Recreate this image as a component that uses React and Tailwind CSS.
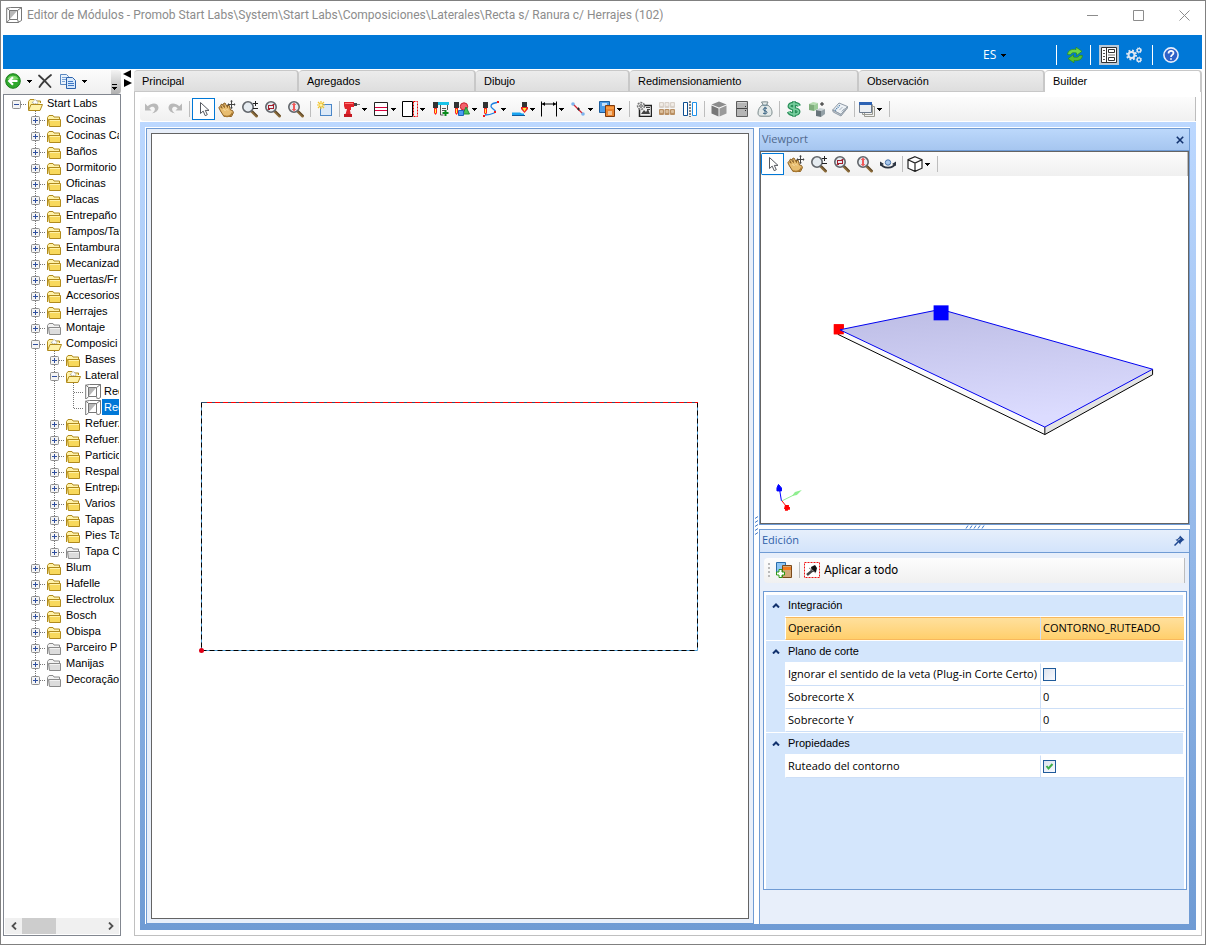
import React, { useState } from "react";

const UI = "font-['Open_Sans','Noto_Sans',sans-serif]";

/* ---------- drawing helpers ---------- */

function Ico({ children, w = 16, h = 16 }) {
  return (
    <svg width={w} height={h} viewBox={`0 0 ${w} ${h}`} fill="none" aria-hidden="true" className="shrink-0">
      {children}
    </svg>
  );
}

function Caret() {
  return (
    <svg width="5" height="3" viewBox="0 0 5 3" aria-hidden="true" className="shrink-0" shapeRendering="crispEdges">
      <path d="M0 0h5v1H4v1H3v1H2V2H1V1H0z" fill="#000" />
    </svg>
  );
}

function Glass({ children }) {
  return (
    <Ico w={18} h={18}>
      <path d="M11 11.5l4.5 4.500" stroke="#8a6a38" strokeWidth="3" strokeLinecap="round" />
      <path d="M11.500 11l4.500 4.500" stroke="#4a3a2a" strokeWidth="1" strokeLinecap="round" />
      <circle cx="7" cy="7" r="5.200" fill="#e6ecf1" stroke="#62666b" strokeWidth="1.600" />
      {children}
    </Ico>
  );
}

const icons = {
  undo: (
    <Ico>
      <path d="M1 2.500v7h6.500l-2.200-2.300C7 5.300 10 5 10.800 7.300c.5 1.800-.6 3.600-2.800 5.200 3.600-.6 6.500-2.800 6.500-5.900C14.500 2 8.200.8 3.700 5.200z" fill="#b9b9b9" />
    </Ico>
  ),
  redo: (
    <Ico>
      <path d="M15 2.500v7H8.500l2.200-2.300C9 5.300 6 5 5.200 7.300c-.5 1.800.6 3.600 2.800 5.200-3.600-.6-6.500-2.800-6.500-5.900C1.500 2 7.800.8 12.300 5.200z" fill="#b9b9b9" />
    </Ico>
  ),
  pointer: (
    <Ico>
      <path d="M4.500 1.500v11l2.700-2.400 2 4.600 2.100-1-2-4.300h3.700z" fill="#fff" stroke="#55585f" />
    </Ico>
  ),
  hand: (
    <Ico w={18} h={18}>
      <path d="M2.500 11L.8 7.500 2 6.500l2.200 1.700L2.500 5 4 4l2.500 3.500L5.500 3.500 7 3l2.500 4.500L9.500 5 11 5l1.500 5 2 .5 1 2-2 4H6z" fill="#e8bd70" stroke="#8a5f22" />
      <path d="M6 16c3.500.8 6 .4 7.500-1.500l1-2" stroke="#a87830" strokeWidth="1.500" />
      <path d="M5.500 9l2 2M8.500 9l1.500 1.500" stroke="#fbe3b0" />
      <path d="M13.500 1v7M10 4.500h7" stroke="#444" />
      <path d="M13.500 0l-1.500 1.500h3zM13.500 9l-1.500-1.500h3zM9.500 4.500L11 3v3zM17.500 4.500L16 3v3z" fill="#444" />
    </Ico>
  ),
  zoomPm: (
    <Glass>
      <path d="M14.500 1v5M12 3.500h5M12 8.500h5" stroke="#222" />
    </Glass>
  ),
  zoomRect: (
    <Glass>
      <rect x="4.500" y="5.500" width="5" height="3" stroke="#a31f2c" />
      <path d="M3 10h3V8zM11 4H8.500v2z" fill="#a31f2c" />
    </Glass>
  ),
  zoomFit: (
    <Glass>
      <path d="M7 2.500L9.300 5H8v4h1.300L7 11.500 4.700 9H6V5H4.700z" fill="#f05a5a" />
    </Glass>
  ),
  newItem: (
    <Ico>
      <rect x="3.500" y="3.500" width="11" height="11" fill="#dbe9f8" stroke="#4a86c8" />
      <path d="M4 0v8M0 4h8M1 1l6 6M7 1L1 7" stroke="#f2c52e" strokeWidth="1.200" />
      <circle cx="4" cy="4" r="1.500" fill="#fff3a8" />
    </Ico>
  ),
  drill: (
    <Ico>
      <path d="M0 1h10v5H7v3H6l1 6H1l2-7H1L0 5z" fill="#e0242b" />
      <path d="M1 2h8v1H1z" fill="#ff7a78" />
      <path d="M0 13h8v3H0z" fill="#c41820" />
      <path d="M10 2h3v3h-3z" fill="#444" />
      <path d="M13 3.500h3" stroke="#777" />
    </Ico>
  ),
  bands: (
    <Ico>
      <path d="M1.500 1.500h13v13h-13z" fill="#fff" stroke="#222" />
      <path d="M2 6.500h12M2 9.500h12" stroke="#d8003c" />
    </Ico>
  ),
  margin: (
    <Ico>
      <path d="M.5.500h10v15H.5z" fill="#fff" stroke="#000" />
      <path d="M11.500.500h4v15h-4z" stroke="#e00" strokeDasharray="2 1" />
    </Ico>
  ),
  millList: (
    <Ico>
      <path d="M0 1h5v6H0z" fill="#333" />
      <path d="M1 7h3v5l-1.500 2L1 12z" fill="#f22" />
      <path d="M2 8h1v4H2z" fill="#ff3" />
      <path d="M5 1h11v3H5z" fill="#19c3e8" />
      <path d="M7.500 4v10h3M14.500 4v5M9 7.500h4M9 9.500h3" stroke="#555" />
      <path d="M12.500 9v6M9.500 12h6" stroke="#0a8a1c" strokeWidth="2" />
    </Ico>
  ),
  millShapes: (
    <Ico>
      <path d="M0 1h5v6H0z" fill="#333" />
      <path d="M1 7h3v5l-1.500 2L1 12z" fill="#f22" />
      <path d="M2 8h1v4H2z" fill="#ff3" />
      <circle cx="10" cy="5.500" r="3.700" fill="#f4626c" stroke="#c8202c" />
      <path d="M12 6l3.500 7H9z" fill="#46c45a" stroke="#1d8a35" />
      <path d="M4.500 9.500h5v5h-5z" fill="#4d9cf2" stroke="#1d62b8" />
    </Ico>
  ),
  millPath: (
    <Ico>
      <path d="M0 1h5v6H0z" fill="#333" />
      <path d="M1 7h3v5l-1.500 2L1 12z" fill="#f22" />
      <path d="M2 8h1v4H2z" fill="#ff3" />
      <path d="M14 1.500c-7 1-7 4-4.500 6s4.500 3 1.500 4.500-4 2-9 2" stroke="#1d7fe0" strokeWidth="1.300" />
      <path d="M14 0h2v2h-2zM11 10h2v2h-2zM0 14h2v2H0z" fill="#f01818" />
    </Ico>
  ),
  millFace: (
    <Ico>
      <path d="M10 1h5v5h-5z" fill="#333" />
      <path d="M9 6h7v2l-3.500 4L9 8z" fill="#e22" />
      <path d="M10.500 7h4l-2 3.500z" fill="#fe3" />
      <path d="M0 11.500h8l2 1h2V14H0z" fill="#1aa4f0" />
      <path d="M0 14.500h13" stroke="#125a9c" />
    </Ico>
  ),
  dimension: (
    <Ico>
      <path d="M.5.500v15M15.500.500v15M1 3h14" stroke="#000" />
      <path d="M1 3l3-2v4zM15 3l-3-2v4z" fill="#000" />
    </Ico>
  ),
  line: (
    <Ico>
      <path d="M3 3l10 10" stroke="#d02030" strokeWidth="1.300" />
      <path d="M7 8h3M8.500 6.500v3" stroke="#222" />
      <circle cx="3" cy="3" r="1.800" fill="#7db4ee" />
      <circle cx="13" cy="13" r="1.800" fill="#7db4ee" />
    </Ico>
  ),
  boxes: (
    <Ico>
      <path d="M.5.500h10v11H.5z" fill="#4d9de8" stroke="#1f5f9e" />
      <path d="M3 2h5v3H3z" fill="#c5e0fa" />
      <path d="M6.500 4.500h9v11h-9z" fill="#e8822c" stroke="#7b3b10" />
      <path d="M9 10h4v4H9z" fill="#f5c08c" />
      <path d="M7 7h8" stroke="#fa9a40" strokeWidth="2" />
    </Ico>
  ),
  gearImage: (
    <Ico>
      <path d="M3.500 4.500h12v11h-12z" fill="#f0f0f0" stroke="#222" strokeWidth="1.500" />
      <path d="M5 13l3-4 2 2 2-3 2 5zM10 6h4v1h-4zM11 8h3v1h-3z" fill="#444" />
      <circle cx="5" cy="5" r="3.400" fill="#eee" stroke="#777" strokeWidth="1.600" strokeDasharray="2 1" />
      <circle cx="5" cy="5" r="1.300" fill="#fff" stroke="#555" />
    </Ico>
  ),
  drawers: (
    <Ico>
      {[0, 5.500, 11].map((x) => (
        <g key={x}>
          <rect x={x} y="1" width="5" height="6" rx="1" fill="#d8d0c8" />
          <rect x={x + 1} y="2" width="3" height="3" rx="1" fill="#f0ebe5" />
          <rect x={x} y="8" width="5" height="6" rx="1" fill="#b98f62" />
          <rect x={x + 1} y="9" width="3" height="3" rx="1" fill="#dcbf9c" />
        </g>
      ))}
    </Ico>
  ),
  mirror: (
    <Ico>
      <path d="M1.500 1.500h4v13h-4z" fill="#fff" stroke="#0d4f92" />
      <path d="M10.500 1.500h4v13h-4z" fill="#fff" stroke="#1f90e8" />
      <path d="M8 0v16" stroke="#111" strokeDasharray="2 1" />
    </Ico>
  ),
  cubeSolid: (
    <Ico>
      <path d="M8 .5l7.500 3L8 6.500.5 3.500z" fill="#8c8c8c" />
      <path d="M.5 4.500L7.500 7.500v8l-7-3z" fill="#777" />
      <path d="M15.500 4.500L8.500 7.500v8l7-3z" fill="#9a9a9a" />
    </Ico>
  ),
  cabinet: (
    <Ico>
      <path d="M2.500.500h11v15h-11z" fill="#b5b5b5" stroke="#5c5c5c" />
      <path d="M3 7.500h10" stroke="#444" />
      <path d="M11 5.500h1M11 9.500h1" stroke="#333" />
      <path d="M3.500 1.500h9" stroke="#d5d5d5" />
    </Ico>
  ),
  moneyBag: (
    <Ico>
      <path d="M6 3.500L4.500 1 8 .8 11 1 9.700 3.500c4 2 5.500 5.500 5.300 8.500-.2 2.300-1.500 3.200-3 3.200H4C2 15.200 1 14 1 12c0-3 1.500-6.500 5-8.500z" fill="#e3e9e8" stroke="#7c8a8c" />
      <path d="M5.500 4.200h5" stroke="#4e7080" />
      <path d="M10 7.500C9 6.500 6.300 6.800 6.300 8.500s3.700 1 3.700 2.800-3 2-4 .7M8 5.800v7.400" stroke="#356080" />
    </Ico>
  ),
  dollar: (
    <Ico>
      <path d="M13 5C12 2 4 2 3.500 5.200 3.200 8.200 12.800 7 12.500 10.800 12 14 4 14 2.800 10.600M8 .2v15.600" stroke="#2b8f5a" strokeWidth="4" />
      <path d="M13 5C12 2 4 2 3.500 5.200 3.200 8.200 12.800 7 12.500 10.800 12 14 4 14 2.800 10.600M8 1v14" stroke="#7ad0a0" strokeWidth="1.600" />
    </Ico>
  ),
  cubes: (
    <Ico>
      <path d="M0 3l4-2 5 1-4 2z" fill="#b5dcb0" />
      <path d="M0 3l5 1v6L0 9z" fill="#7fae7c" />
      <path d="M5 4l4-2v6l-4 2z" fill="#9ccb98" />
      <path d="M7 9l4-2 5 1-4 2z" fill="#c9d2d6" />
      <path d="M7 9l5 1v6l-5-1z" fill="#68747a" />
      <path d="M12 10l4-2v5l-4 3z" fill="#93a0a6" />
      <path d="M13 1v4M11 3h4" stroke="#222" />
    </Ico>
  ),
  tag: (
    <Ico>
      <path d="M.7 9L7 2l8.500 3.500L9 13.500z" fill="#eef2f6" stroke="#8f9aa5" />
      <path d="M.7 9l.5 2L9 15l6.500-8V5.500L9 13.500z" fill="#cdd4da" stroke="#8f9aa5" />
      <path d="M3 9.500L8 4" stroke="#4a7ba8" strokeDasharray="1 1" strokeWidth="1.500" />
      <path d="M7.500 9l3-3M9.500 10.500l3-3" stroke="#a7b4c0" />
    </Ico>
  ),
  windows: (
    <Ico>
      <path d="M5.500 5.500h10v10h-10zM3.500 3.500h10v10h-10z" fill="#f2f2f0" stroke="#9a9a92" />
      <path d="M.5 1.500h12v10H.5z" fill="#eceff2" stroke="#6d7a8c" />
      <path d="M0 1h13v3H0z" fill="#2c62b4" />
    </Ico>
  ),
  orbit: (
    <Ico>
      <circle cx="8" cy="6.500" r="2.700" fill="#a9c9ee" stroke="#4872a8" />
      <path d="M1 7.500c1.500 5.500 12.500 5.500 14 0" stroke="#2c3440" strokeWidth="1.800" />
      <path d="M0 10V5.500L4 8zM16 10V5.500L12 8z" fill="#2c3440" />
    </Ico>
  ),
  cubeWire: (
    <Ico>
      <path d="M8 .7l7 3v8.500l-7 3.200-7-3.200V3.700zM1 3.700L8 7l7-3.300M8 7v8.500" fill="#fff" stroke="#222" strokeWidth="1.200" />
    </Ico>
  ),
  back: (
    <Ico>
      <circle cx="8" cy="8" r="7.300" fill="#2fa82c" stroke="#1c7d1c" />
      <path d="M2.500 6C4 1.500 12 1.500 13.500 6 10 7.500 6 7.500 2.500 6z" fill="#7fd86e" />
      <path d="M12.500 8H5M8 4.200L4.200 8 8 11.800" stroke="#fff" strokeWidth="2.200" />
    </Ico>
  ),
  remove: (
    <Ico>
      <path d="M2 2.500C6 6 10 10 13.500 14M14 2C9 6 5 10 2.500 14" stroke="#3c3c3c" strokeWidth="1.800" strokeLinecap="round" />
    </Ico>
  ),
  copy: (
    <Ico>
      <path d="M.5 1.500h6l2 2v8h-8z" fill="#eaf3fc" stroke="#5b88c0" />
      <path d="M2 4.500h4M2 6.500h4M2 8.500h3" stroke="#7ba4d8" />
      <path d="M6.500 4.500h6l3 3v8h-9z" fill="#d6e8fb" stroke="#2c62ac" />
      <path d="M8 8.500h5M8 10.500h6M8 12.500h6" stroke="#3f78c4" />
    </Ico>
  ),
  refresh: (
    <Ico>
      <path d="M.5 7.500C.8 3.500 4.500 1.800 9 2.500V.2L15 4.300 9.500 8.500V6C6.500 5.300 4.500 5.500 3.500 7.800z" fill="#6fd648" stroke="#2b8a18" strokeWidth=".7" />
      <path d="M15.500 8.500c-.3 4-4 5.700-8.500 5v2.300L1 11.700l5.500-4.200V10c3 .7 5 .5 6-1.800z" fill="#55c030" stroke="#2b8a18" strokeWidth=".7" />
    </Ico>
  ),
  panels: (
    <Ico>
      <path d="M.5.500h15v15H.5z" fill="#fff" stroke="#333" />
      <path d="M5.500 1v14" stroke="#333" />
      <path d="M2 3.500h2M2 6.500h2M2 9.500h2M2 12.500h2" stroke="#555" />
      <path d="M7.500 2.500h6v3h-6zM7.500 10.500h6v3h-6z" stroke="#333" />
      <path d="M7 8h7" stroke="#777" />
    </Ico>
  ),
  gears: (
    <Ico>
      <circle cx="5.500" cy="8" r="4.500" stroke="#dfe7f2" strokeWidth="2" strokeDasharray="1.800 1.730" />
      <circle cx="5.500" cy="8" r="3" stroke="#dfe7f2" strokeWidth="2" />
      <circle cx="13" cy="3.300" r="1.800" stroke="#dfe7f2" strokeWidth="1.400" />
      <circle cx="13" cy="3.300" r="2.600" stroke="#dfe7f2" strokeDasharray="1 1" />
      <circle cx="13" cy="12.700" r="1.800" stroke="#dfe7f2" strokeWidth="1.400" />
      <circle cx="13" cy="12.700" r="2.600" stroke="#dfe7f2" strokeDasharray="1 1" />
    </Ico>
  ),
  help: (
    <Ico>
      <circle cx="8" cy="8" r="7.100" fill="#2f62c8" stroke="#e8eefb" strokeWidth="1.600" />
      <path d="M5.500 6.500C5.500 3 10.800 3.200 10.500 6.200 10.300 8 8 8 8 10M8 11.200v1.600" stroke="#fff" strokeWidth="1.700" />
    </Ico>
  ),
  addModule: (
    <Ico>
      <path d="M.5.500h9v11h-9z" fill="#8ec6f4" stroke="#2a6cab" />
      <path d="M6.500 3.500h9v12h-9z" fill="#d2a878" stroke="#7b4a1c" />
      <path d="M7 6.500h8" stroke="#f37a1c" strokeWidth="3" />
      <path d="M3 7.500h3v2.500h2.500v3H6v2.500H3V13H.5v-3H3z" fill="#fff" stroke="#2d9a10" />
    </Ico>
  ),
  applyAll: (
    <Ico>
      <path d="M.5.500h15v15H.5z" fill="#fff" stroke="#e11" strokeDasharray="2 1" />
      <path d="M7 5l4-2 2 3-1 4-4 0z" fill="#111" />
      <path d="M9 8l-6 5" stroke="#444" strokeWidth="2.500" />
      <path d="M5 6l7 5" stroke="#888" />
    </Ico>
  ),
};

function ModuleIcon() {
  return (
    <Ico>
      <path d="M.7 1.200L4.500.500h11v13l-3.500 2H.7z" fill="#fff" stroke="#777" />
      <path d="M3.500 3.500h8v9h-8z" fill="#fff" stroke="#777" />
      <path d="M4 12V4h7z" fill="#b8b8b8" />
      <path d="M.7 1l3 2.500M11.500 3.500l4-3M11.500 12.500l1 3M.7 15.500l3-3" stroke="#777" />
    </Ico>
  );
}

function Folder({ open, gray }) {
  const c = gray
    ? { s: "#8a8a8a", a: "#f2f2f2", b: "#dcdcdc" }
    : { s: "#b08a1c", a: "#fff2a8", b: "#f8d95c" };
  return (
    <Ico w={15} h={13}>
      <path d="M.5 12V3.500l1.500-2h4l1 1.500h5.500V5" fill={c.a} stroke={c.s} />
      {open ? (
        <>
          <path d="M4 5l3-3.500L10 4l-1 2z" fill="#fff" stroke="#9a9a9a" strokeDasharray="1 1" />
          <path d="M.5 12.500l2.500-6h11.500l-2.500 6z" fill={c.a} stroke={c.s} />
        </>
      ) : (
        <path d="M2.500 12.500L1.500 5.500h12v7z" fill={c.b} stroke={c.s} />
      )}
      {!open && <path d="M3 6.500h10" stroke={c.a} />}
    </Ico>
  );
}

/* ---------- toolbar parts ---------- */

function Tool({ icon, label, menu, active }) {
  const size = menu ? "w-[29px] justify-start gap-0.5 pl-0.5" : "w-[23px] justify-center";
  const frame = active ? "border border-[#0078d7] bg-white" : "";
  return (
    <button type="button" aria-label={label} className={`flex h-[22px] shrink-0 items-center ${size} ${frame}`}>
      {icons[icon]}
      {menu && <Caret />}
    </button>
  );
}

function Sep() {
  return (
    <span className="flex h-4 w-1.5 shrink-0 justify-end pr-0.5">
      <span className="w-px bg-[#bdbdbd]" />
    </span>
  );
}

const mainTools = [
  ["undo", "Deshacer"], ["redo", "Rehacer"], null,
  ["pointer", "Seleccionar", 0, 1], ["hand", "Mover"], ["zoomPm", "Zoom"], ["zoomRect", "Zoom de área"], ["zoomFit", "Zoom total"], null,
  ["newItem", "Nuevo"], null,
  ["drill", "Perforación", 1], ["bands", "Ranura", 1], ["margin", "Margen", 1], ["millList", "Lista de fresado"],
  ["millShapes", "Formas", 1], ["millPath", "Trayectoria", 1], ["millFace", "Superficie", 1], ["dimension", "Cota", 1],
  ["line", "Línea", 1], ["boxes", "Módulos", 1], null,
  ["gearImage", "Configurar imagen"], ["drawers", "Cajones"], ["mirror", "Espejar"], null,
  ["cubeSolid", "Sólido"], ["cabinet", "Mueble"], ["moneyBag", "Costo"], null,
  ["dollar", "Precio"], ["cubes", "Componentes"], ["tag", "Etiqueta"], null,
  ["windows", "Ventanas", 1], null,
];

const viewTools = [
  ["pointer", "Seleccionar", 0, 1], ["hand", "Mover"], ["zoomPm", "Zoom"], ["zoomRect", "Zoom de área"],
  ["zoomFit", "Zoom total"], ["orbit", "Orbitar"], null, ["cubeWire", "Vista", 1], null,
];

function Toolbar({ items, label }) {
  return (
    <div role="toolbar" aria-label={label} className="flex h-6 shrink-0 items-center overflow-hidden rounded-l border-r border-[#bdbdbd] bg-linear-to-b from-[#fcfcfc] to-[#f0f0f0]">
      {items.map((t, i) =>
        t ? <Tool key={i} icon={t[0]} label={t[1]} menu={!!t[2]} active={!!t[3]} /> : <Sep key={i} />
      )}
    </div>
  );
}

/* ---------- tree ---------- */

// [level, text, kind, state]; kind: f folder, g grey folder, o open folder, m module
const tree = [
  [0, "Start Labs", "o"],
  [1, "Cocinas", "f"], [1, "Cocinas Ca", "f"], [1, "Baños", "f"], [1, "Dormitorio", "f"], [1, "Oficinas", "f"],
  [1, "Placas", "f"], [1, "Entrepaño", "f"], [1, "Tampos/Ta", "f"], [1, "Entambura", "f"], [1, "Mecanizad", "f"],
  [1, "Puertas/Fr", "f"], [1, "Accesorios", "f"], [1, "Herrajes", "f"], [1, "Montaje", "g"], [1, "Composici", "o"],
  [2, "Bases", "f"], [2, "Lateral", "o"],
  [3, "Rec", "m"], [3, "Rec", "m", "selected"],
  [2, "Refuerz", "f"], [2, "Refuerz", "f"], [2, "Particio", "f"], [2, "Respal", "f"], [2, "Entrepa", "f"],
  [2, "Varios", "f"], [2, "Tapas", "f"], [2, "Pies Ta", "f"], [2, "Tapa C", "g"],
  [1, "Blum", "f"], [1, "Hafelle", "f"], [1, "Electrolux", "f"], [1, "Bosch", "f"], [1, "Obispa", "f"],
  [1, "Parceiro P", "g"], [1, "Manijas", "g"], [1, "Decoração", "g"],
];

function hasNext(index, level) {
  for (let i = index + 1; i < tree.length; i++) {
    if (tree[i][0] < level) return false;
    if (tree[i][0] === level) return true;
  }
  return false;
}

function Guide({ index, column }) {
  const [level, , kind] = tree[index];
  const own = column === level;
  const next = hasNext(index, column);
  return (
    <svg width="19" height="16" viewBox="0 0 19 16" fill="none" aria-hidden="true" className="shrink-0">
      {column > 0 && (own || next) && (
        <path d={`M9.500 0V${next ? 16 : 9}`} stroke="#777" strokeDasharray="1 1" />
      )}
      {own && <path d="M10 9.500h9" stroke="#777" strokeDasharray="1 1" />}
      {own && kind !== "m" && (
        <>
          <rect x="5.500" y="5.500" width="8" height="8" rx="1" fill="#f4f4f4" stroke="#8f8f8f" />
          <path d={kind === "o" ? "M7 9.500h5" : "M7 9.500h5M9.500 7v5"} stroke="#2f4f9f" />
        </>
      )}
    </svg>
  );
}

function TreeRow({ index }) {
  const [level, text, kind, state] = tree[index];
  return (
    <li role="treeitem" aria-level={level + 1} aria-selected={state === "selected"} className="flex h-4 items-center overflow-hidden">
      {Array.from({ length: level + 1 }, (_, c) => (
        <Guide key={c} index={index} column={c} />
      ))}
      <span className="flex w-[19px] shrink-0 justify-center pt-0.5">
        {kind === "m" ? <ModuleIcon /> : <Folder open={kind === "o"} gray={kind === "g"} />}
      </span>
      <span className={`px-0.5 whitespace-nowrap ${state ? "bg-[#0078d7] text-white" : ""}`}>{text}</span>
    </li>
  );
}

function Sidebar() {
  return (
    <aside className="flex w-[118px] shrink-0 flex-col font-['Liberation_Sans',sans-serif] text-[11px] leading-4">
      <div role="toolbar" aria-label="Navegación" className="flex h-6 items-stretch bg-linear-to-b from-[#fcfcfc] to-[#f0f0f0] pl-0.5">
        <button type="button" aria-label="Volver" className="flex w-8 items-center gap-1.5 pb-0.5">
          {icons.back}
          <Caret />
        </button>
        <button type="button" aria-label="Eliminar" className="flex w-[23px] items-center justify-start pb-0.5">
          {icons.remove}
        </button>
        <button type="button" aria-label="Copiar" className="flex items-center gap-1.5 pb-0.5">
          {icons.copy}
          <Caret />
        </button>
        <button type="button" aria-label="Más opciones" className="ml-auto flex w-2.5 flex-col items-start justify-end gap-0.5 rounded-r bg-linear-to-b from-[#f4f4f4] to-[#b0b0b0] pb-1 pl-px">
          <span className="h-px w-[5px] bg-black" />
          <Caret />
        </button>
      </div>
      <div className="flex min-h-0 grow flex-col overflow-hidden border border-[#828790] bg-white">
        <ul role="tree" aria-label="Start Labs" className="grow overflow-hidden pr-px pl-[3px]">
          {tree.map((_, i) => (
            <TreeRow key={i} index={i} />
          ))}
        </ul>
        <div className="m-px flex h-4 items-center bg-[#f0f0f0]">
          <button type="button" aria-label="Izquierda" className="flex w-[17px] justify-center">
            <Ico w={6} h={8}><path d="M5 .5L1.500 4 5 7.500" stroke="#505050" strokeWidth="1.800" /></Ico>
          </button>
          <span className="h-full w-[34px] bg-[#cdcdcd]" />
          <button type="button" aria-label="Derecha" className="ml-auto flex w-[17px] justify-center">
            <Ico w={6} h={8}><path d="M1 .5L4.500 4 1 7.500" stroke="#505050" strokeWidth="1.800" /></Ico>
          </button>
        </div>
      </div>
    </aside>
  );
}

/* ---------- workspace ---------- */

const tabs = [
  ["Principal", "grow-[155]"],
  ["Agregados", "grow-[167]"],
  ["Dibujo", "grow-[144]"],
  ["Redimensionamiento", "grow-[219]"],
  ["Observación", "grow-[176]"],
  ["Builder", "grow-[147]"],
];

function Canvas() {
  return (
    <div className="flex min-w-0 grow-[598] basis-0 border border-[#6f9bd4] bg-[#e8effa] p-1">
      <div className="flex min-h-0 grow items-center justify-center overflow-hidden border border-[#646464] bg-white">
        <svg width="502" height="254" viewBox="0 0 502 254" fill="none" className="shrink-0">
          <path d="M2.500 3.500v248M2.500 251.500h496M498.500 3.500v248" stroke="#4f9fd8" />
          <path d="M2.500 3.500v248" stroke="#000" strokeDasharray="5 3" />
          <path d="M2.500 251.500h496" stroke="#000" strokeDasharray="5 3" />
          <path d="M498.500 3.500v248" stroke="#000" strokeDasharray="5 3" />
          <path d="M2 3.500h497" stroke="#30506c" />
          <path d="M8 3.500h491" stroke="#f00" strokeDasharray="5 3" />
          <circle cx="2.500" cy="251.500" r="2.500" fill="#e00018" />
        </svg>
      </div>
    </div>
  );
}

function Scene() {
  return (
    <svg viewBox="0 0 428 344" preserveAspectRatio="xMidYMid meet" fill="none" className="min-h-0 w-full grow">
      <defs>
        <linearGradient id="board" x1="0" y1="0" x2="0.200" y2="1">
          <stop offset="0" stopColor="#bcbce4" />
          <stop offset="1" stopColor="#dcdcff" />
        </linearGradient>
      </defs>
      <path d="M79 153L284.500 250v7.500L77 157z" fill="#fafafa" />
      <path d="M284.500 250L392.500 192v5.500l-108 60z" fill="#e4e4e4" />
      <path d="M77 157l207.500 100.500 108-60V192M284.500 250v7.500" stroke="#000" />
      <path d="M73 147h10v10H73z" fill="#f00" />
      <path d="M79 152.500L180 132l212.500 60-108 58z" fill="url(#board)" stroke="#0000f0" />
      <path d="M73 147h6v10h-6zM77 147h6v4h-6z" fill="#f00" />
      <path d="M173 128h15v15h-15z" fill="#00f" />
      <path d="M20.500 324l-2-12" stroke="#00f" />
      <path d="M17.500 307.500l3 3.500v3h-4.500v-3z" fill="#00f" stroke="#00f" />
      <path d="M21 324l12-6" stroke="#90ee90" />
      <path d="M31 319l3-4 7-2-5 5z" fill="#90ee90" />
      <path d="M21 324l4 5" stroke="#f00" />
      <path d="M24 328h4v2h1v3h-2v1h-3v-2h-1z" fill="#f00" />
    </svg>
  );
}

const groups = [
  { title: "Integración", rows: [{ label: "Operación", value: "CONTORNO_RUTEADO", selected: true }] },
  {
    title: "Plano de corte",
    rows: [
      { label: "Ignorar el sentido de la veta (Plug-in Corte Certo)", check: false },
      { label: "Sobrecorte X", value: "0" },
      { label: "Sobrecorte Y", value: "0" },
    ],
  },
  { title: "Propiedades", rows: [{ label: "Ruteado del contorno", check: true }] },
];

function Check({ id, initial }) {
  const [on, setOn] = useState(initial);
  return (
    <span className="relative flex size-[13px]">
      <input
        id={id}
        type="checkbox"
        checked={on}
        onChange={(e) => setOn(e.target.checked)}
        className="size-[13px] appearance-none border border-[#1f5a9a] bg-linear-to-br from-[#dde3ee] to-[#f8faff]"
      />
      {on && (
        <svg width="9" height="9" viewBox="0 0 9 9" fill="none" className="pointer-events-none absolute top-0.5 left-0.5">
          <path d="M1.500 4l2 2.500 4-4.500" stroke="#3fae49" strokeWidth="2" />
        </svg>
      )}
    </span>
  );
}

function PropertyRow({ row, id }) {
  const bg = row.selected
    ? "border-y border-y-[#f8b85c] bg-linear-to-b from-[#ffe09c] to-[#ffcf6b]"
    : "border-y border-t-white border-b-[#cddff7] bg-white";
  return (
    <tr className="h-[23px]">
      <td className="bg-[#d4e6fc]" />
      <td className={`border-l border-l-white pl-0.5 ${bg}`}>
        <label htmlFor={id} className="block whitespace-nowrap">{row.label}</label>
      </td>
      <td className={`border-l border-l-[#cddff7] px-0.5 ${bg}`}>
        {row.value === undefined ? (
          <Check id={id} initial={row.check} />
        ) : (
          <input id={id} type="text" defaultValue={row.value} className="block h-4 w-full bg-transparent" />
        )}
      </td>
    </tr>
  );
}

function PropertyGrid() {
  return (
    <div className={`mt-2 mr-0.5 mb-[34px] ml-[3px] flex min-h-0 grow flex-col overflow-hidden border border-[#6f9bd4] bg-white px-0.5 pt-0.5 text-[11px] leading-4 ${UI}`}>
      <div className="grow bg-[#d4e6fc]">
        <table className="w-full table-fixed border-separate border-spacing-0">
          <colgroup>
            <col className="w-[19px]" />
            <col className="w-[255px]" />
            <col />
          </colgroup>
          {groups.map((g, gi) => (
            <tbody key={g.title}>
              <tr className="h-[23px]">
                <th className="border-t border-white bg-[#d4e6fc]">
                  <button type="button" aria-label={`Contraer ${g.title}`} className="flex w-full justify-center">
                    <Ico w={8} h={5}><path d="M1 4.500l3-3 3 3" stroke="#12326e" strokeWidth="2" /></Ico>
                  </button>
                </th>
                <th colSpan={2} className="border-y border-r border-white bg-[#d4e6fc] pl-[3px] text-left font-['Liberation_Sans',sans-serif] font-normal">
                  {g.title}
                </th>
              </tr>
              {g.rows.map((r, ri) => (
                <PropertyRow key={r.label} row={r} id={`prop-${gi}-${ri}`} />
              ))}
            </tbody>
          ))}
        </table>
      </div>
    </div>
  );
}

function Grip({ vertical }) {
  return (
    <svg width={vertical ? 5 : 20} height={vertical ? 20 : 4} fill="none" aria-hidden="true">
      {[0, 4, 8, 12, 16].map((p) => (
        <path key={p} d={vertical ? `M1 ${p + 2.500}l3-2` : `M${p + 1} 3.500l2-3`} stroke="#3f78c8" />
      ))}
    </svg>
  );
}

function RightColumn() {
  return (
    <div className={`flex min-w-0 grow-[431] basis-0 flex-col ${UI}`}>
      <section aria-label="Viewport" className="flex min-h-0 grow basis-0 flex-col border border-[#6f9bd4] bg-white">
        <header className="flex h-[22px] shrink-0 items-center justify-between border-b border-[#6f9bd4] bg-linear-to-b from-[#bcd8fb] to-[#a6c6f0] pr-[5px] pl-0.5 text-[11px] text-[#50698e]">
          <h2>Viewport</h2>
          <button type="button" aria-label="Cerrar">
            <Ico w={8} h={8}><path d="M.8.800l6.400 6.400M7.200.800L.8 7.200" stroke="#12326e" strokeWidth="1.600" /></Ico>
          </button>
        </header>
        <div className="flex min-h-0 grow flex-col border border-[#646464] bg-white">
          <Toolbar items={viewTools} label="Viewport" />
          <Scene />
        </div>
      </section>
      <div className="flex h-1 shrink-0 justify-center bg-white">
        <Grip />
      </div>
      <section aria-label="Edición" className="flex min-h-0 grow basis-0 flex-col border border-b-0 border-[#6f9bd4] bg-[#e8effa]">
        <header className="flex h-[23px] shrink-0 items-center justify-between border-b border-[#6f9bd4] bg-linear-to-b from-[#e6effb] to-[#d3e4fb] pr-1 pl-0.5 text-[11px] text-[#2f5fa8]">
          <h2>Edición</h2>
          <button type="button" aria-label="Fijar panel">
            <Ico w={11} h={11}>
              <path d="M6 .5l4.500 4.500-1.500.5L6.500 8v1.500L1.500 4.500H3L5.500 2z" fill="#1d4690" />
              <path d="M6 3.500l-2 2" stroke="#fff" />
              <path d="M4 7L.5 10.500" stroke="#1d4690" strokeWidth="1.500" />
            </Ico>
          </button>
        </header>
        <div role="toolbar" aria-label="Edición" className="mx-1 mt-[5px] flex h-[25px] shrink-0 items-center rounded-l border-r border-[#bdbdbd] bg-linear-to-b from-[#fdfdfd] to-[#f0f0f0] pl-1 font-['Roboto',sans-serif] text-[12px]">
          <svg width="2" height="14" aria-hidden="true" className="mr-1.5 shrink-0">
            <path d="M1 0v14" stroke="#bbb" strokeWidth="2" strokeDasharray="2 2" />
          </svg>
          <button type="button" aria-label="Agregar módulo" className="mr-1">{icons.addModule}</button>
          <Sep />
          <button type="button" className="flex items-center gap-1 pl-0.5 whitespace-nowrap">
            {icons.applyAll}
            Aplicar a todo
          </button>
        </div>
        <PropertyGrid />
      </section>
    </div>
  );
}

function Workspace() {
  const [tab, setTab] = useState("Builder");
  return (
    <main className="flex min-w-0 grow flex-col">
      <div role="tablist" aria-label="Secciones" className="flex h-[22px] shrink-0 font-['Liberation_Sans',sans-serif] text-[11px]">
        {tabs.map(([name, grow]) => (
          <button
            key={name}
            type="button"
            role="tab"
            aria-selected={tab === name}
            onClick={() => setTab(name)}
            className={`basis-0 truncate rounded-t-sm border-t border-r-2 border-[#c8c8c8] pl-2 text-left ${grow} ${
              tab === name ? "bg-white" : "border-b bg-linear-to-b from-[#ececec] to-[#dedede]"
            }`}
          >
            {name}
          </button>
        ))}
      </div>
      <div className="flex min-h-0 grow flex-col border-x border-b border-[#c0c0c0] p-[5px]">
        <Toolbar items={mainTools} label="Herramientas" />
        <div className="mt-px flex min-h-0 grow bg-linear-to-b from-[#bcd8ff] to-[#6f9bd4] pt-[5px] pr-1.5 pb-1.5 pl-[5px]">
          <div className="flex min-w-0 grow border-t border-l border-white">
            <Canvas />
            <div className="flex w-[5px] shrink-0 items-center bg-white">
              <Grip vertical />
            </div>
            <RightColumn />
          </div>
        </div>
      </div>
    </main>
  );
}

/* ---------- window ---------- */

export default function App() {
  return (
    <div className="flex h-screen min-h-[760px] flex-col border border-[#808080] bg-white pr-[3px] pb-2 pl-0.5 text-black">
      <header className="flex h-[34px] shrink-0 items-center pb-1.5 pl-[3px] font-['Roboto',sans-serif]">
        <ModuleIcon />
        <h1 className="ml-[5px] truncate text-[12px] text-[#8c8c8c]">
          Editor de Módulos - Promob Start Labs\System\Start Labs\Composiciones\Laterales\Recta s/ Ranura c/ Herrajes (102)
        </h1>
        <div className="ml-auto flex shrink-0 pr-3">
          <button type="button" aria-label="Minimizar" className="mr-[35px]">
            <Ico w={11} h={11}><path d="M0 5.500h11" stroke="#8c8c8c" /></Ico>
          </button>
          <button type="button" aria-label="Maximizar" className="mr-[35px]">
            <Ico w={11} h={11}><path d="M.5.500h10v10H.5z" stroke="#8c8c8c" /></Ico>
          </button>
          <button type="button" aria-label="Cerrar">
            <Ico w={11} h={11}><path d="M.5.500l10 10M10.500.500l-10 10" stroke="#8c8c8c" /></Ico>
          </button>
        </div>
      </header>

      <nav aria-label="Principal" className="flex h-[34px] shrink-0 items-center justify-end bg-[#0078d7] pt-1.5 pr-[23px]">
        <label className="mr-[50px] flex items-center gap-0.5">
          <select aria-label="Idioma" className={`w-4 appearance-none bg-transparent text-[12px] text-white ${UI}`}>
            <option>ES</option>
          </select>
          <Caret />
        </label>
        <span className="mr-2.5 h-5 w-px bg-white" />
        <button type="button" aria-label="Actualizar">{icons.refresh}</button>
        <span className="mr-2 ml-[7px] h-5 w-px bg-white" />
        <button type="button" aria-label="Paneles" className="flex size-5 items-center justify-center bg-[#b9c9d8]">{icons.panels}</button>
        <button type="button" aria-label="Configuración" className="ml-[7px]">{icons.gears}</button>
        <span className="mx-2.5 h-5 w-px bg-white" />
        <button type="button" aria-label="Ayuda">{icons.help}</button>
      </nav>

      <div className="mt-px flex min-h-0 grow">
        <Sidebar />
        <button type="button" aria-label="Contraer panel" className="flex w-[13px] shrink-0 items-start justify-center">
          <svg width="9" height="18" viewBox="0 0 9 18" aria-hidden="true">
            <path d="M8 0v8L0 4zM1 9l8 4-8 4z" fill="#000" />
          </svg>
        </button>
        <Workspace />
      </div>
    </div>
  );
}
